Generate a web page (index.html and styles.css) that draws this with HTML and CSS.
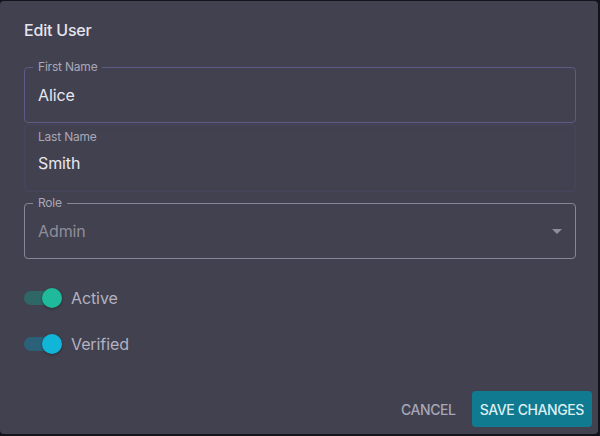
FILE: index.html
```html
<!DOCTYPE html>
<html>
<head>
<meta charset="utf-8">
<link rel="stylesheet" href="styles.css">
</head>
<body>
<div class="dialog">
  <h2 class="title">Edit User</h2>
  <div class="fields">
    <div class="field outlined first">
      <span class="label">First Name</span>
      <span class="value">Alice</span>
    </div>
    <div class="field plain">
      <span class="label-static">Last Name</span>
      <span class="value">Smith</span>
    </div>
    <div class="field outlined role">
      <span class="label">Role</span>
      <span class="value muted">Admin</span>
      <svg class="arrow" width="10" height="5" viewBox="0 0 10 5"><path d="M0 0 L10 0 L5 5 Z" fill="#8f8e9c"/></svg>
    </div>
  </div>
  <div class="switches">
    <div class="switch-row">
      <span class="switch green"><span class="track"></span><span class="thumb"></span></span>
      <span class="switch-label">Active</span>
    </div>
    <div class="switch-row">
      <span class="switch cyan"><span class="track"></span><span class="thumb"></span></span>
      <span class="switch-label">Verified</span>
    </div>
  </div>
  <div class="actions">
    <button class="btn text">CANCEL</button>
    <button class="btn primary">SAVE CHANGES</button>
  </div>
</div>
</body>
</html>
```
FILE: styles.css
```css
html, body {
  margin: 0;
  padding: 0;
  background: #13131c;
  width: 600px;
  height: 436px;
  overflow: hidden;
  font-family: Inter, "Noto Sans", sans-serif;
}
.dialog {
  box-sizing: border-box;
  margin-top: 1px;
  width: 598px;
  height: 433px;
  background: #42414f;
  border-radius: 4px;
  padding: 0 22px 0 24px;
  display: flex;
  flex-direction: column;
}
.title {
  margin: 17px 0 0;
  font-size: 16px;
  line-height: 24px;
  font-weight: 500;
  color: #e6e5ef;
  letter-spacing: -0.2px;
}
.fields {
  margin-top: 25px;
  display: flex;
  flex-direction: column;
}
.field {
  box-sizing: border-box;
  position: relative;
  height: 56px;
  display: flex;
  align-items: center;
  padding: 0 14px 0 13px;
  border-radius: 4px;
}
.outlined.first {
  border: 1px solid #5d5a86;
}
.outlined.role {
  border: 1px solid #878696;
  margin-top: 11px;
  padding-right: 13px;
}
.plain {
  margin-top: 1px;
  height: 68px;
  flex-direction: column;
  align-items: flex-start;
  justify-content: flex-start;
  padding-top: 6px;
  padding-left: 14px;
  box-shadow: inset 0 0 0 1px rgba(100, 92, 170, 0.12), inset 0 0 6px rgba(100, 92, 170, 0.12);
}
.label {
  position: absolute;
  top: -8px;
  left: 8px;
  padding: 0 5px;
  background: #42414f;
  font-size: 12px;
  line-height: 14px;
  color: #a9a8b8;
  letter-spacing: -0.2px;
}
.label-static {
  font-size: 12px;
  line-height: 14px;
  color: #a9a8b8;
  letter-spacing: -0.2px;
}
.plain .value {
  margin-top: 9px;
}
.value {
  font-size: 16px;
  line-height: 20px;
  color: #e8e7f0;
  letter-spacing: -0.1px;
}
.value.muted {
  color: #8f8e9c;
}
.arrow {
  margin-left: auto;
}
.switches {
  margin-top: 28px;
  display: flex;
  flex-direction: column;
  gap: 24px;
}
.switch-row {
  display: flex;
  align-items: center;
  height: 22px;
}
.switch {
  position: relative;
  width: 38px;
  height: 22px;
  display: inline-block;
}
.track {
  position: absolute;
  left: 0;
  top: 4px;
  width: 36px;
  height: 14px;
  border-radius: 7px;
}
.thumb {
  position: absolute;
  left: 18px;
  top: 1px;
  width: 20px;
  height: 20px;
  border-radius: 50%;
  box-shadow: 0 1px 3px rgba(0,0,0,0.35);
}
.green .track { background: #2f6766; }
.green .thumb { background: #1fb99c; }
.cyan .track { background: #2c617a; }
.cyan .thumb { background: #10b5d8; }
.switch-label {
  margin-left: 9px;
  font-size: 16px;
  color: #b3b2c1;
  letter-spacing: -0.1px;
}
.actions {
  margin-top: auto;
  margin-right: -16px;
  margin-bottom: 7px;
  display: flex;
  justify-content: flex-end;
  gap: 8px;
}
.btn {
  font-family: Inter, "Noto Sans", sans-serif;
  font-size: 14px;
  font-weight: 500;
  letter-spacing: -0.4px;
  height: 36px;
  border: none;
  border-radius: 4px;
  padding: 0 8px;
  white-space: nowrap;
  cursor: pointer;
}
.btn.text {
  background: transparent;
  color: #a8a7b6;
}
.btn.primary {
  background: #107a91;
  color: #dceff3;
  min-width: 120px;
}
```
